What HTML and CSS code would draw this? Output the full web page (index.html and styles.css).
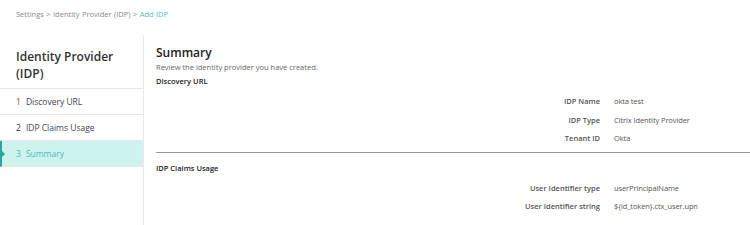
FILE: index.html
```html
<!DOCTYPE html>
<html lang="en">
<head>
  <meta charset="UTF-8" />
  <title>Add IDP</title>
  <link rel="stylesheet" href="styles.css">
</head>
<body>

<div class="crumbs">
  <span>Settings</span> &gt; <span>Identity Provider (IDP)</span> &gt; <span class="current">Add IDP</span>
</div>

<div class="wizard">
  <aside class="steps">
    <h2>Identity Provider (IDP)</h2>
    <div class="step"><span class="num red">1</span>Discovery URL</div>
    <div class="step"><span class="num">2</span>IDP Claims Usage</div>
    <div class="step active"><span class="num">3</span>Summary</div>
  </aside>

  <main class="summary">
    <h1>Summary</h1>
    <p class="hint">Review the identity provider you have created.</p>

    <h3>Discovery URL</h3>
    <div class="fields">
      <div class="field"><span class="label">IDP Name</span><span class="value">okta test</span></div>
      <div class="field"><span class="label">IDP Type</span><span class="value">Citrix Identity Provider</span></div>
      <div class="field"><span class="label">Tenant ID</span><span class="value">Okta</span></div>
    </div>

    <hr>

    <h3>IDP Claims Usage</h3>
    <div class="fields">
      <div class="field"><span class="label">User Identifier type</span><span class="value">userPrincipalName</span></div>
      <div class="field"><span class="label">User Identifier string</span><span class="value">${id_token}.ctx_user.upn</span></div>
    </div>
  </main>
</div>

</body>
</html>
```

FILE: styles.css
```css
html, body {
  margin: 0;
  padding: 0;
  font-family: 'Open Sans', sans-serif;
  color: #333;
  background: #fff;
}
.crumbs {
  padding: 9px 16px 0;
  height: 26px;
  font-size: 7.5px;
  color: #8a8a8a;
  word-spacing: 0.5px;
}
.crumbs .current {
  color: #4cbfb5;
}
.wizard {
  display: flex;
  height: 199px;
}
.steps {
  width: 143px;
  border-right: 1px solid #e8e8e8;
}
.steps h2 {
  margin: 0;
  padding: 13px 16px 6px;
  font-size: 12px;
  line-height: 17px;
  font-weight: 600;
  color: #333;
  border-bottom: 1px solid #e6e6e6;
}
.step {
  position: relative;
  height: 25px;
  line-height: 25px;
  padding-left: 16px;
  font-size: 8.5px;
  color: #3d4553;
  border-bottom: 1px solid #e6e6e6;
}
.step .num {
  margin-right: 5px;
  color: #333;
}
.step .num.red {
  color: #a33a3a;
}
.step.active {
  background: #cdf3ee;
  color: #4cbfb5;
  border-left: 2px solid #23a99e;
  padding-left: 14px;
}
.step.active .num {
  color: #4cbfb5;
}
.step.active::before {
  content: "";
  position: absolute;
  left: 0;
  top: 10px;
  border: 3px solid transparent;
  border-left-color: #23a99e;
}
.summary {
  flex: 1;
  padding: 9px 0 0 12px;
}
.summary h1 {
  margin: 0;
  font-size: 12px;
  line-height: 17px;
  font-weight: 600;
  color: #222;
}
.hint {
  margin: 0;
  font-size: 7.5px;
  line-height: 12px;
  color: #666;
}
.summary h3 {
  margin: 0;
  padding-top: 2px;
  font-size: 7.5px;
  line-height: 13px;
  font-weight: 600;
  color: #222;
}
.fields {
  padding: 4px 0 4px;
}
.field {
  display: flex;
  height: 18.5px;
  align-items: center;
  font-size: 7.5px;
}
.field .label {
  width: 444px;
  text-align: right;
  font-weight: 600;
  color: #555;
}
.field .value {
  margin-left: 14px;
  color: #555;
  letter-spacing: -0.1px;
}
.summary hr {
  margin: 0 0 7px;
  border: 0;
  border-top: 1.5px solid #999;
}
```
